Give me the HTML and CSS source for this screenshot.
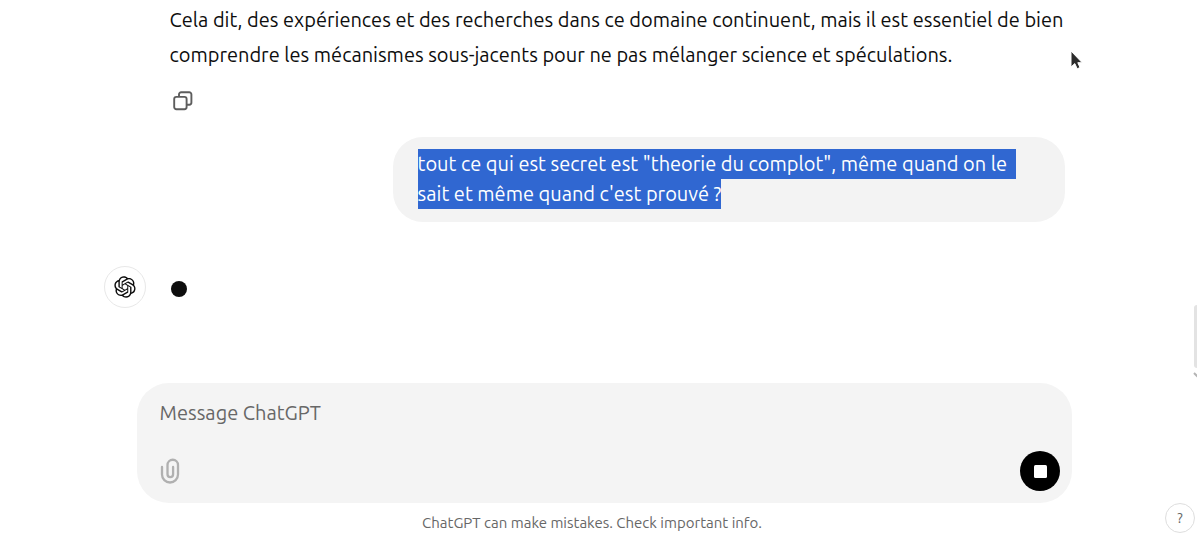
FILE: index.html
```
<!DOCTYPE html>
<html lang="fr">
<head>
  <meta charset="UTF-8">
  <title>ChatGPT</title>
  <link rel="stylesheet" href="styles.css">
</head>
<body>
  <main class="chat">
    <div class="thread">
      <div class="answer">
        <span class="line">Cela dit, des expériences et des recherches dans ce domaine continuent, mais il est essentiel de bien</span>
        <span class="line">comprendre les mécanismes sous-jacents pour ne pas mélanger science et spéculations.</span>
      </div>
      <svg class="copy-icon" width="20" height="20" viewBox="0 0 20 20" fill="none" stroke="#5d5d5d" stroke-width="1.9">
        <rect x="1.2" y="5.9" width="12.4" height="12.4" rx="2.2"/>
        <path d="M6 5.5V3.5a2.2 2.2 0 0 1 2.2-2.2h8a2.2 2.2 0 0 1 2.2 2.2v8a2.2 2.2 0 0 1-2.2 2.2H14"/>
      </svg>
      <div class="question">
        <div class="line"><mark class="selected selected-full">tout ce qui est secret est "theorie du complot", même quand on le</mark></div>
        <div class="line"><mark class="selected">sait et même quand c'est prouvé ?</mark></div>
      </div>
      <div class="pending">
        <div class="avatar">
          <svg class="logo" width="22" height="22" viewBox="0 0 41 41" fill="#0d0d0d">
            <path d="M37.5324 16.8707C37.9808 15.5241 38.1363 14.0974 37.9886 12.6859C37.8409 11.2744 37.3934 9.91076 36.676 8.68622C35.6126 6.83404 33.9882 5.3676 32.0373 4.4985C30.0864 3.62941 27.9098 3.40259 25.8215 3.85078C24.8796 2.7893 23.7219 1.94125 22.4257 1.36341C21.1295 0.785575 19.7249 0.491269 18.3058 0.500197C16.1708 0.495044 14.0893 1.16803 12.3614 2.42214C10.6335 3.67624 9.34853 5.44666 8.6917 7.47815C7.30085 7.76286 5.98686 8.3414 4.8377 9.17505C3.68854 10.0087 2.73073 11.0782 2.02839 12.312C0.956464 14.1591 0.498905 16.2988 0.721698 18.4228C0.944492 20.5467 1.83612 22.5449 3.268 24.1293C2.81966 25.4759 2.66413 26.9026 2.81182 28.3141C2.95951 29.7256 3.40701 31.0892 4.12437 32.3138C5.18791 34.1659 6.8123 35.6322 8.76321 36.5013C10.7141 37.3704 12.8907 37.5973 14.9789 37.1492C15.9208 38.2107 17.0786 39.0587 18.3747 39.6366C19.6709 40.2144 21.0755 40.5087 22.4946 40.4998C24.6307 40.5054 26.7133 39.8321 28.4418 38.5772C30.1704 37.3223 31.4556 35.5506 32.1119 33.5179C33.5027 33.2332 34.8167 32.6547 35.9659 31.821C37.115 30.9874 38.0728 29.9178 38.7752 28.684C39.8458 26.8371 40.3023 24.6979 40.0789 22.5748C39.8556 20.4517 38.9639 18.4544 37.5324 16.8707ZM22.4978 37.8849C20.7443 37.8874 19.0459 37.2733 17.6994 36.1501C17.7601 36.117 17.8666 36.0586 17.936 36.0161L25.9004 31.4156C26.1003 31.3019 26.2663 31.137 26.3813 30.9378C26.4964 30.7386 26.5563 30.5124 26.5549 30.2825V19.0542L29.9213 20.998C29.9389 21.0068 29.9541 21.0198 29.9656 21.0359C29.977 21.052 29.9842 21.0707 29.9867 21.0902V30.3889C29.9842 32.375 29.1946 34.2791 27.7909 35.6841C26.3872 37.0892 24.4838 37.8806 22.4978 37.8849ZM6.39227 31.0064C5.51397 29.4888 5.19742 27.7107 5.49804 25.9832C5.55718 26.0187 5.66048 26.0818 5.73461 26.1244L13.699 30.7248C13.8975 30.8408 14.1233 30.902 14.3532 30.902C14.583 30.902 14.8088 30.8408 15.0073 30.7248L24.731 25.1103V28.9979C24.7321 29.0177 24.7283 29.0376 24.7199 29.0556C24.7115 29.0736 24.6988 29.0893 24.6829 29.1012L16.6317 33.7497C14.9096 34.7416 12.8643 35.0097 10.9447 34.4954C9.02506 33.9811 7.38785 32.7263 6.39227 31.0064ZM4.29707 13.6194C5.17156 12.0998 6.55279 10.9364 8.19885 10.3327C8.19885 10.4013 8.19491 10.5228 8.19491 10.6071V19.808C8.19351 20.0378 8.25334 20.2638 8.36823 20.4629C8.48312 20.6619 8.64893 20.8267 8.84863 20.9404L18.5723 26.5542L15.206 28.4979C15.1894 28.5089 15.1703 28.5155 15.1505 28.5173C15.1307 28.5191 15.1107 28.516 15.0924 28.5082L7.04046 23.8557C5.32135 22.8601 4.06716 21.2235 3.55289 19.3046C3.03862 17.3858 3.30624 15.3413 4.29707 13.6194ZM31.955 20.0556L22.2312 14.4411L25.5976 12.4981C25.6142 12.4872 25.6333 12.4805 25.6531 12.4787C25.6729 12.4769 25.6928 12.4801 25.7111 12.4879L33.7631 17.1364C34.9967 17.849 36.0017 18.8982 36.6606 20.1613C37.3194 21.4244 37.6047 22.849 37.4832 24.2684C37.3617 25.6878 36.8382 27.0432 35.9743 28.1759C35.1103 29.3086 33.9415 30.1717 32.6047 30.6641C32.6047 30.5947 32.6047 30.4733 32.6047 30.3889V21.188C32.6066 20.9586 32.5474 20.7328 32.4332 20.5338C32.319 20.3348 32.154 20.1698 31.955 20.0556ZM35.3055 15.0128C35.2464 14.9765 35.1431 14.9142 35.069 14.8717L27.1045 10.2712C26.906 10.1554 26.6803 10.0943 26.4504 10.0943C26.2206 10.0943 25.9948 10.1554 25.7963 10.2712L16.0726 15.8858V11.9982C16.0715 11.9783 16.0753 11.9585 16.0837 11.9405C16.0921 11.9225 16.1048 11.9068 16.1207 11.8949L24.1719 7.25025C25.4053 6.53903 26.8158 6.19376 28.2383 6.25482C29.6608 6.31589 31.0364 6.78077 32.2044 7.59508C33.3723 8.40939 34.2842 9.53945 34.8334 10.8531C35.3826 12.1667 35.5464 13.6095 35.3055 15.0128ZM14.2424 21.9419L10.8752 19.9981C10.8576 19.9893 10.8423 19.9763 10.8309 19.9602C10.8195 19.9441 10.8122 19.9254 10.8098 19.9058V10.6071C10.8107 9.18295 11.2173 7.78848 11.9819 6.58696C12.7466 5.38544 13.8377 4.42659 15.1275 3.82264C16.4173 3.21869 17.8524 2.99464 19.2649 3.1767C20.6775 3.35876 22.0089 3.93941 23.1034 4.85067C23.0427 4.88379 22.937 4.94215 22.8668 4.98473L14.9024 9.58517C14.7025 9.69878 14.5366 9.86356 14.4215 10.0626C14.3065 10.2616 14.2466 10.4877 14.2479 10.7175L14.2424 21.9419ZM16.071 17.9991L20.4018 15.4978L24.7325 17.9975V22.9985L20.4018 25.4983L16.071 22.9985V17.9991Z"/>
          </svg>
        </div>
        <span class="dot"></span>
      </div>
    </div>

    <form class="composer">
      <label class="placeholder">Message ChatGPT</label>
      <div class="tools">
        <svg class="clip" width="20" height="26" viewBox="0 0 20 26" fill="none" stroke="#b0b0b0" stroke-width="2.3" stroke-linecap="round">
          <path d="M2 9v7.5a8 8 0 0 0 16 0V7a5.25 5.25 0 0 0-10.5 0v9.3a2.8 2.8 0 0 0 5.6 0V9"/>
        </svg>
        <button class="stop" type="button"><span class="stop-square"></span></button>
      </div>
    </form>
    <p class="notice">ChatGPT can make mistakes. Check important info.</p>
  </main>

  <div class="scroll-thumb"></div>
  <svg class="scroll-arrow" width="4" height="6" viewBox="0 0 4 6" fill="none" stroke="#b4b4b4" stroke-width="2">
    <path d="M1 1l4 4"/>
  </svg>
  <button class="help" type="button">?</button>
  <svg class="pointer" width="16" height="24" viewBox="0 0 16 24">
    <path d="M2 2v16l3.8-3.4 2.4 5.2 2.8-1.3-2.2-4.8h4.4z" fill="#2b2b2b" stroke="#fff"/>
  </svg>
</body>
</html>
```
FILE: styles.css
```
body {
  margin: 0;
  height: 534px;
  overflow: hidden;
  background: #fff;
  color: #0d0d0d;
  font-family: Ubuntu, "Noto Sans", sans-serif;
  font-size: 20px;
}
.chat {
  width: 935px;
  height: 534px;
  margin-left: 137px;
  display: flex;
  flex-direction: column;
}
.thread {
  height: 383px;
  padding: 0 7px 0 32.5px;
  box-sizing: border-box;
  display: flex;
  flex-direction: column;
}
.line {
  display: block;
  white-space: nowrap;
}
.answer {
  padding-top: 2px;
  line-height: 35px;
}
.copy-icon {
  margin: 18.5px 0 0 3.5px;
}
.question {
  align-self: flex-end;
  width: 672px;
  height: 85px;
  margin-top: 26.5px;
  padding: 12px 25px 12px 24.6px;
  box-sizing: border-box;
  border-radius: 30px;
  background: #f3f3f3;
  line-height: 30px;
}
.selected {
  display: inline-block;
  height: 30px;
  background: #3067d1;
  color: #fff;
}
.selected-full {
  width: 598px;
}
.pending {
  display: flex;
  align-items: center;
  gap: 25px;
  margin: 44px 0 0 -65.5px;
}
.avatar {
  width: 40px;
  height: 40px;
  border: 1px solid #e8e8e8;
  border-radius: 50%;
  display: flex;
  justify-content: center;
  align-items: center;
}
.logo {
  margin-right: 1px;
}
.dot {
  width: 16px;
  height: 16px;
  margin-top: 4px;
  border-radius: 50%;
  background: #0d0d0d;
}
.composer {
  height: 120px;
  padding: 15px 12px 12px 22.6px;
  box-sizing: border-box;
  border-radius: 32px;
  background: #f4f4f4;
  display: flex;
  flex-direction: column;
  justify-content: space-between;
}
.placeholder {
  color: #676767;
  line-height: 30px;
}
.tools {
  display: flex;
  justify-content: space-between;
  align-items: center;
}
.stop {
  width: 40px;
  height: 40px;
  padding: 0;
  border: none;
  border-radius: 50%;
  background: #000;
  display: flex;
  justify-content: center;
  align-items: center;
}
.stop-square {
  width: 13px;
  height: 13px;
  border-radius: 1.5px;
  background: #fff;
}
.notice {
  margin: 10px 25px 0 0;
  text-align: center;
  font-size: 15px;
  line-height: 20px;
  color: #676767;
}
.scroll-thumb {
  position: absolute;
  right: 0;
  top: 305px;
  width: 3px;
  height: 63px;
  border-radius: 3px 0 0 3px;
  background: #e3e3e3;
}
.scroll-arrow {
  position: absolute;
  right: 0;
  top: 372px;
}
.help {
  position: absolute;
  left: 1165px;
  top: 503px;
  width: 30px;
  height: 30px;
  padding: 0;
  border: 1px solid #dedede;
  border-radius: 50%;
  background: #fff;
  color: #676767;
  font-family: inherit;
  font-size: 14px;
}
.pointer {
  position: absolute;
  left: 1069px;
  top: 49px;
}
```
